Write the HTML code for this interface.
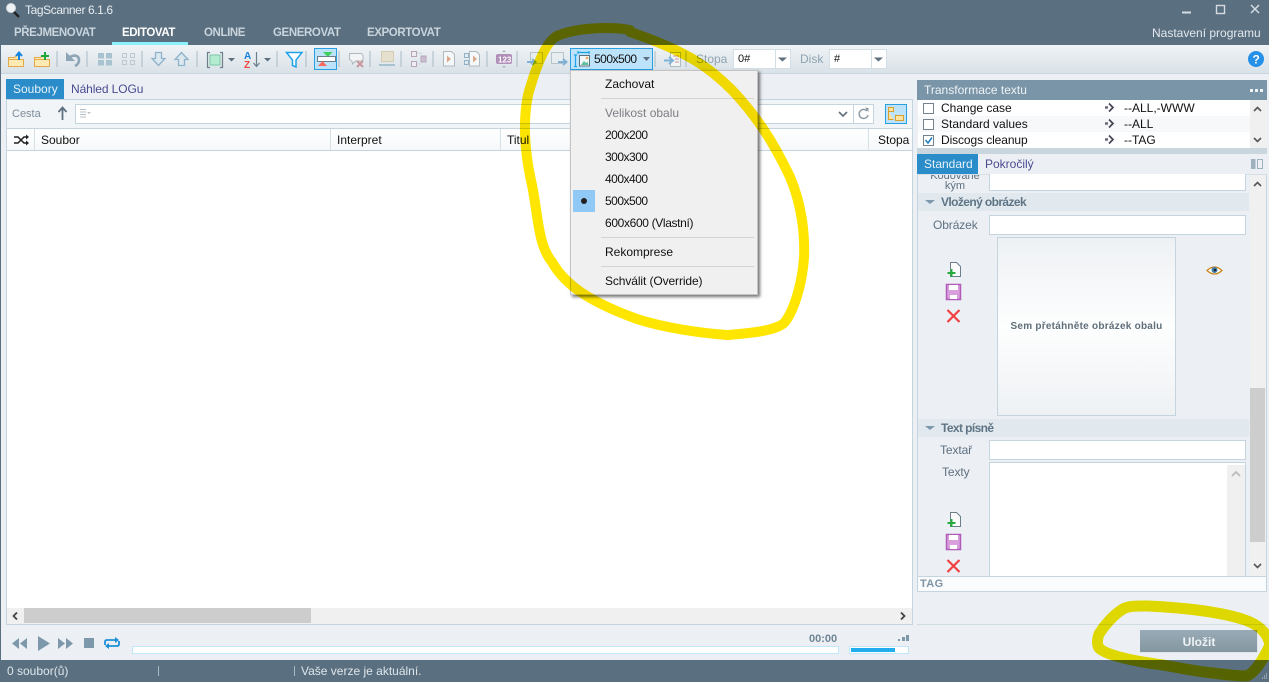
<!DOCTYPE html>
<html><head><meta charset="utf-8"><title>TagScanner</title>
<style>
html,body{margin:0;padding:0;background:#fff;width:1278px;height:684px;overflow:hidden}
#w{position:absolute;left:0;top:0;width:1269px;height:682px;overflow:hidden;background:#ecf0f5;font:12px "Liberation Sans",sans-serif;color:#111}
.b{position:absolute;box-sizing:border-box}
.t{position:absolute;white-space:nowrap;line-height:16px}
.n{letter-spacing:-.5px}
.m{color:#c9d4dc;font-weight:bold;top:25px;font-size:11.5px;letter-spacing:-.4px}
.l{color:#5f7080;letter-spacing:-.1px}
.h{color:#5f7585;font-weight:bold;letter-spacing:-.6px}
svg{position:absolute;left:0;top:0}
.i{background:#fff;border:1px solid #c5d5df}
</style></head><body><div id="w">

<div class="b" style="left:0;top:0;width:1269px;height:45px;background:#5a6f80"></div>
<div class="b" style="left:0;top:45px;width:1269px;height:29px;background:linear-gradient(#f0f3f6,#d9e2e8);border-bottom:1px solid #c9d6de"></div>
<div class="b" style="left:112px;top:42px;width:76px;height:3px;background:#8cf0fa"></div>
<div class="b" style="left:0;top:45px;width:1px;height:615px;background:#5a6f80"></div>

<div class="t" style="left:25px;top:2px;color:#e8edf0;letter-spacing:-.4px">TagScanner 6.1.6</div>
<div class="t m" style="left:14px">PŘEJMENOVAT</div>
<div class="t m" style="left:122px;color:#fff">EDITOVAT</div>
<div class="t m" style="left:204px">ONLINE</div>
<div class="t m" style="left:273px">GENEROVAT</div>
<div class="t m" style="left:367px">EXPORTOVAT</div>
<div class="t" style="left:1152px;top:25px;color:#e3e9ed">Nastavení programu</div>

<div class="b" style="left:314px;top:48px;width:23px;height:22px;background:#bde3fb;border:1px solid #2a9fe0"></div>
<div class="b" style="left:570px;top:48px;width:83px;height:22px;background:#bde3fb;border:1px solid #2a9fe0"></div>
<div class="t n" style="left:594px;top:51px">500x500</div>
<div class="t" style="left:696px;top:51px;color:#8fa3b1">Stopa</div>
<div class="t" style="left:800px;top:51px;color:#8fa3b1">Disk</div>
<div class="b i" style="left:733px;top:49px;width:58px;height:20px;border-color:#d4dee5"></div>
<div class="b" style="left:775px;top:50px;width:1px;height:18px;background:#d4dee5"></div>
<div class="b i" style="left:829px;top:49px;width:58px;height:20px;border-color:#d4dee5"></div>
<div class="b" style="left:871px;top:50px;width:1px;height:18px;background:#d4dee5"></div>
<div class="t" style="left:738px;top:51px;font-size:11px">0#</div>
<div class="t" style="left:834px;top:51px;font-size:11px">#</div>

<div class="b" style="left:6px;top:79px;width:58px;height:20px;background:#2a8cc8"></div>
<div class="t" style="left:13px;top:81px;color:#e8f3fa">Soubory</div>
<div class="t" style="left:71px;top:81px;color:#4a4a90;letter-spacing:-.1px">Náhled LOGu</div>
<div class="b" style="left:6px;top:99px;width:907px;height:526px;border:1px solid #c5d5df;background:#f2f5f8"></div>
<div class="t" style="left:12px;top:106px;color:#7d8c98;font-size:11px">Cesta</div>
<div class="b i" style="left:75px;top:104px;width:799px;height:20px"></div>
<div class="b" style="left:853px;top:105px;width:1px;height:18px;background:#c5d5df"></div>
<div class="b" style="left:885px;top:104px;width:22px;height:20px;background:#bde3fb;border:1px solid #2a9fe0"></div>
<div class="b" style="left:7px;top:128px;width:905px;height:23px;background:linear-gradient(#fff,#f6f8fa);border-top:1px solid #c5d5df;border-bottom:1px solid #c5d5df"></div>
<div class="b" style="left:34px;top:129px;width:1px;height:21px;background:#d5e0e7"></div>
<div class="b" style="left:330px;top:129px;width:1px;height:21px;background:#d5e0e7"></div>
<div class="b" style="left:500px;top:129px;width:1px;height:21px;background:#d5e0e7"></div>
<div class="b" style="left:868px;top:129px;width:1px;height:21px;background:#d5e0e7"></div>
<div class="t" style="left:41px;top:132px">Soubor</div>
<div class="t" style="left:337px;top:132px">Interpret</div>
<div class="t" style="left:507px;top:132px">Titul</div>
<div class="t" style="left:878px;top:132px">Stopa</div>
<div class="b" style="left:7px;top:151px;width:905px;height:457px;background:#fff"></div>
<div class="b" style="left:7px;top:608px;width:905px;height:16px;background:#f0f0f0"></div>
<div class="b" style="left:24px;top:608px;width:287px;height:15px;background:#cdcdcd"></div>

<div class="b" style="left:132px;top:646px;width:707px;height:8px;background:#fff;border:1px solid #bfe6fb"></div>
<div class="b" style="left:849px;top:646px;width:60px;height:8px;background:#fff;border:1px solid #bfe6fb"></div>
<div class="b" style="left:851px;top:648px;width:44px;height:4px;background:#22aeee"></div>
<div class="t" style="left:809px;top:631px;font-size:11px;font-weight:bold;color:#708494">00:00</div>

<div class="b" style="left:917px;top:80px;width:350px;height:20px;background:#7b95a8"></div>
<div class="t" style="left:924px;top:82px;color:#eef3f6">Transformace textu</div>
<div class="b" style="left:918px;top:100px;width:349px;height:48px;background:#fff"></div>
<div class="b" style="left:918px;top:116px;width:332px;height:16px;background:#f7f8fa"></div>
<div class="b" style="left:1250px;top:100px;width:17px;height:48px;background:#f0f0f0"></div>
<div class="b" style="left:917px;top:148px;width:350px;height:6px;background:#c9d6de"></div>
<div class="t" style="left:941px;top:100px">Change case</div>
<div class="t" style="left:941px;top:116px">Standard values</div>
<div class="t" style="left:941px;top:132px;letter-spacing:-.1px">Discogs cleanup</div>
<div class="t" style="left:1124px;top:100px">--ALL,-WWW</div>
<div class="t" style="left:1124px;top:116px">--ALL</div>
<div class="t" style="left:1124px;top:132px">--TAG</div>
<div class="b" style="left:923px;top:103px;width:11px;height:11px;background:#fff;border:1px solid #75828c"></div>
<div class="b" style="left:923px;top:119px;width:11px;height:11px;background:#fff;border:1px solid #75828c"></div>
<div class="b" style="left:923px;top:135px;width:11px;height:11px;background:#fff;border:1px solid #75828c"></div>

<div class="b" style="left:917px;top:154px;width:61px;height:20px;background:#2a8cc8"></div>
<div class="t" style="left:924px;top:156px;color:#e8f3fa">Standard</div>
<div class="t" style="left:985px;top:156px;color:#4a4a90">Pokročilý</div>
<div class="b" style="left:917px;top:174px;width:350px;height:403px;border:1px solid #c5d5df;border-top:1px solid #d5e0e7;background:#ecf0f5"></div>
<div class="b" style="left:1250px;top:175px;width:16px;height:401px;background:#f0f0f0"></div>
<div class="b" style="left:1250px;top:388px;width:15px;height:154px;background:#cdcdcd"></div>
<div class="b" style="left:925px;top:175px;width:60px;height:17px;overflow:hidden;text-align:center;color:#5f7080;font-size:11px;line-height:10px"><div style="margin-top:-4px">Kódované<br>kým</div></div>
<div class="b i" style="left:989px;top:174px;width:257px;height:17px;border-top:0"></div>
<div class="b" style="left:918px;top:193px;width:331px;height:18px;background:#e1e8ee"></div>
<div class="t h" style="left:941px;top:194px">Vložený obrázek</div>
<div class="t l" style="left:933px;top:217px">Obrázek</div>
<div class="b i" style="left:989px;top:215px;width:257px;height:20px"></div>
<div class="b" style="left:997px;top:237px;width:179px;height:179px;border:1px solid #c5d5df;background:linear-gradient(#eef1f4,#fdfefe 50%,#eef1f4)"></div>
<div class="t" style="left:997px;top:319px;width:179px;text-align:center;font-size:10px;font-weight:bold;color:#5f6e7a;letter-spacing:.25px">Sem přetáhněte obrázek obalu</div>
<div class="b" style="left:918px;top:419px;width:331px;height:18px;background:#e1e8ee"></div>
<div class="t h" style="left:941px;top:420px">Text písně</div>
<div class="t l" style="left:940px;top:442px">Textař</div>
<div class="b i" style="left:989px;top:440px;width:257px;height:20px"></div>
<div class="t l" style="left:942px;top:464px">Texty</div>
<div class="b i" style="left:989px;top:462px;width:257px;height:115px"></div>
<div class="b" style="left:1227px;top:465px;width:18px;height:111px;background:#f0f0f0"></div>
<div class="b" style="left:917px;top:576px;width:350px;height:16px;border:1px solid #c5d5df;background:#fafbfd"></div>
<div class="t" style="left:920px;top:576px;font-size:11px;font-weight:bold;color:#7e94a5;letter-spacing:.4px">TAG</div>
<div class="b" style="left:917px;top:624px;width:350px;height:1px;background:#d0dde3"></div>
<div class="b" style="left:1140px;top:630px;width:118px;height:23px;background:linear-gradient(#99abb7,#84969f);border-right:1px solid #dfe6ea;border-bottom:1px solid #dfe6ea"></div>
<div class="t" style="left:1140px;top:634px;width:118px;text-align:center;font-weight:bold;color:#eef2f4">Uložit</div>

<div class="b" style="left:0;top:660px;width:1269px;height:22px;background:#5a6f80"></div>
<div class="t" style="left:7px;top:663px;color:#dfe6ea">0 soubor(ů)</div>
<div class="t" style="left:301px;top:663px;color:#dfe6ea">Vaše verze je aktuální.</div>
<div class="b" style="left:158px;top:666px;width:1px;height:10px;background:#aab8c2"></div>
<div class="b" style="left:294px;top:666px;width:1px;height:10px;background:#aab8c2"></div>

<svg width="1269" height="682" viewBox="0 0 1269 682" fill="none">
<!-- magnifier -->
<circle cx="11" cy="8" r="4.5" fill="#eef2f4" stroke="#cfd8de"/><path d="M14 12l5 5" stroke="#222" stroke-width="2.4"/>
<!-- window buttons -->
<path d="M1182 12.500h9" stroke="#d5dde2" stroke-width="2"/><rect x="1216.500" y="5.500" width="8" height="8" stroke="#d5dde2" stroke-width="1.400"/><path d="M1251 5l8 8M1259 5l-8 8" stroke="#d5dde2" stroke-width="1.500"/>
<!-- separators -->
<path d="M57 51v16M87 51v16M142 51v16M197 51v16M277 51v16M306 51v16M339 51v16M370 51v16M401 51v16M433 51v16M487 51v16M517 51v16M655 51v16M686 51v16" stroke="#a9bac6"/>
<!-- folders -->
<g stroke="#e3a94a" fill="#fde9b4"><path d="M8.500 57.500h6l2-2h3v11h-11z"/><path d="M8.500 59.500h15v7h-15z"/><path d="M34.500 57.500h6l2-2h3v11h-11z"/><path d="M34.500 59.500h15v7h-15z"/></g>
<path d="M19 60v-7M16 56l3-3.500 3 3.500" stroke="#1683dc" stroke-width="2"/><path d="M45 52v8M41 56h8" stroke="#22a83a" stroke-width="2"/>
<!-- undo -->
<path d="M66 52v9h9z" fill="#8ea5b5"/><path d="M70 57c5-3 9-1 9 3 0 3-2 5-4 6" stroke="#8ea5b5" stroke-width="2.600"/>
<!-- grids -->
<g fill="#a9c2cf"><rect x="98" y="53" width="6" height="5.500"/><rect x="106" y="53" width="6" height="5.500"/><rect x="98" y="60" width="6" height="5.500"/><rect x="106" y="60" width="6" height="5.500"/></g>
<g stroke="#bcc7ce"><rect x="122.500" y="53.500" width="4" height="4"/><rect x="130.500" y="53.500" width="4" height="4"/><rect x="122.500" y="60.500" width="4" height="4"/><rect x="130.500" y="60.500" width="4" height="4"/></g>
<!-- down up -->
<path d="M155.500 52.500h6v6h3.500l-6.500 7-6.500-7h3.500z" stroke="#8fb3cb" stroke-width="1.300" fill="#dce8ef"/><path d="M178.500 65.500h6v-6h3.500l-6.500-7-6.500 7h3.500z" stroke="#8fb3cb" stroke-width="1.300" fill="#dce8ef"/>
<!-- frame -->
<rect x="210" y="55" width="10" height="10" fill="#b3ecd0" stroke="#7ec8a8"/><path d="M210 52.500h-2.500v15h2.500M220 52.500h2.500v15h-2.500" stroke="#6c7f8c" stroke-width="1.200"/>
<path d="M228 58h7l-3.500 3.500zM264 58h7l-3.500 3.500zM643 57h7l-3.500 4zM778 57.500h9l-4.500 4zM874 57.500h9l-4.500 4z" fill="#5d6f7d"/>
<!-- AZ -->
<text x="244" y="59" font-family="Liberation Sans" font-size="10" font-weight="bold" fill="#1683dc">A</text><text x="244" y="68" font-family="Liberation Sans" font-size="10" font-weight="bold" fill="#f0483e">Z</text>
<path d="M256.500 52v14M253.500 63l3 3.500 3-3.500" stroke="#6c7f8c" stroke-width="1.200"/>
<!-- funnel -->
<path d="M286.500 52.500h15.500l-6 7.500v7l-3.500-1.500v-5.500z" stroke="#1fa3e8" stroke-width="1.500" fill="#fff"/>
<!-- toggled -->
<path d="M323 52h9.500l-4.750 5z" fill="#3ed05a"/><rect x="317.500" y="56.500" width="18" height="5" fill="#fff" stroke="#6c7f8c"/><path d="M318 66l4.500-5 4.500 5z" fill="#f86a5e"/>
<!-- comment-x -->
<path d="M349.500 53.500h12l1.500 2v4l-1.500 1.500h-6l-3 3-0.500-3-2.500-1.500z" stroke="#aeb9c0" fill="#f2f4f6"/><path d="M357 61l6 6M363 61l-6 6" stroke="#c8979b" stroke-width="2"/>
<!-- gray folder -->
<path d="M381.500 51.500h12v10h-12z" stroke="#d3cbb4" fill="#e6e1cf"/><path d="M379 65h16" stroke="#a9c2cf" stroke-width="2"/>
<!-- squares -->
<g stroke="#b6a6bc" fill="#f0edf2"><rect x="411.500" y="51.500" width="5" height="5"/><rect x="411.500" y="61.500" width="5" height="5"/></g><rect x="421" y="56" width="5" height="6" fill="#cdbdd2" stroke="#b6a6bc"/><path d="M417 53h4M417 64h4M421 53v2M421 62v2" stroke="#bcc7ce" stroke-dasharray="1 1"/>
<!-- page play -->
<path d="M443.500 51.500h8l3 3v11.500h-11z" stroke="#aeb9c0" fill="#f6f7f8"/><path d="M447 55.500l4 3.500-4 3.500z" fill="#d9a98b"/>
<path d="M469.500 51.500h7l3 3v11.500h-10z" stroke="#aeb9c0" fill="#f6f7f8"/><path d="M473 55.500l4 3.500-4 3.500z" fill="#d9a98b"/><rect x="464.500" y="53.500" width="4" height="4" fill="none" stroke="#8fb3cb"/><rect x="464.500" y="60.500" width="4" height="4" fill="none" stroke="#8fb3cb"/>
<!-- 123 -->
<rect x="496" y="54" width="16" height="10" rx="2" fill="#b08fb8"/><text x="498" y="62.500" font-family="Liberation Sans" font-size="8" font-weight="bold" fill="#fff">123</text><path d="M502 52l2-2 2 2M502 66l2 2 2-2" fill="#a8b6c0"/>
<!-- image arrows -->
<rect x="530.500" y="52.500" width="12" height="11" stroke="#b8c4cc" fill="#e8edf0"/><path d="M527 62h8M532 59l3.500 3-3.500 3" stroke="#7fb2d6" stroke-width="2"/>
<rect x="551.500" y="52.500" width="12" height="11" stroke="#b8c4cc" fill="#e8edf0"/><path d="M558 62h8M563 59l3.500 3-3.500 3" stroke="#7fb2d6" stroke-width="2"/>
<!-- size icon -->
<path d="M578 52.500h11M578 51v3M589 51v3M575.500 55v11M574 55h3M574 66.500h3" stroke="#1fa3e8" stroke-width="1.200"/><rect x="579.500" y="55.500" width="10" height="10.500" fill="#f4f7f8" stroke="#5d6f7d"/><path d="M581 65l3-4 2 2 1.500-1.500 1 3.500z" fill="#5cc0a0"/><circle cx="587" cy="58" r="1.300" fill="#e8a860"/>
<!-- list -->
<rect x="670.500" y="52.500" width="10" height="14" stroke="#aeb9c0" fill="#f2f4f6"/><path d="M673 56h6M675 59h4M675 62h4" stroke="#c8979b"/><path d="M664 60.500h9M669 57l4 3.500-4 3.500" stroke="#7fb2d6" stroke-width="2"/>
<!-- help -->
<circle cx="1256" cy="59" r="8" fill="#2590e8"/><text x="1252.500" y="63.500" font-family="Liberation Sans" font-size="12" font-weight="bold" fill="#fff">?</text>
<!-- path row -->
<path d="M62.500 120v-12M58.500 112l4-4.500 4 4.500" stroke="#5f7080" stroke-width="1.800"/>
<path d="M80 109.500h6M80 112h6M80 114.500h6M80 117h6" stroke="#b4bfc7"/><path d="M87 112h4l-2 2z" fill="#b4bfc7"/>
<path d="M839 112l4 4 4-4" stroke="#5f7080" stroke-width="1.600"/>
<path d="M867 111a4.500 4.500 0 1 0 1 4" stroke="#8a98a2" stroke-width="1.400"/><path d="M865 107.500l3.500 .5v4z" fill="#8a98a2"/>
<path d="M888.500 107.500h5v4h-5zM888.500 111.500v8h5M895.500 115.500h8v5h-8z" stroke="#d99e2e" fill="#fde3a0"/>
<path d="M14 137h4l6 6h4M14 143h4l6-6h4" stroke="#222" stroke-width="1.500"/><path d="M26 134.500l3 2.500-3 2.500zM26 140.500l3 2.500-3 2.500z" fill="#222"/>
<!-- hscroll arrows -->
<path d="M17 612.500l-3.500 3.500 3.500 3.500M901 612.500l3.500 3.500-3.500 3.500" stroke="#444" stroke-width="1.800"/>
<!-- player -->
<g fill="#7d98ab"><path d="M19 638v11l-7-5.500zM27 638v11l-7-5.500zM38 636v15l12-7.500zM58 638v11l7-5.500zM66 638v11l7-5.500z"/><rect x="84" y="638" width="10" height="10"/><rect x="898" y="639" width="2" height="2"/><rect x="902" y="637" width="3" height="4"/><rect x="906" y="635" width="3" height="6"/></g>
<path d="M105 645v-3q0-2 2-2h11M119 641v3q0 2-2 2h-11" stroke="#1d8fd6" stroke-width="1.800"/><path d="M115 637l4 3-4 3zM109 643l-4 3 4 3z" fill="#1d8fd6"/>
<!-- transform -->
<path d="M1250 90h3v3h-3zM1255 90h3v3h-3zM1260 90h3v3h-3z" fill="#eef3f6" transform="translate(0 -1)"/>
<path d="M1105 107.500h3M1105 123.500h3M1105 139.500h3" stroke="#667" stroke-width="2.400"/><path d="M1109 103.500l4 4-4 4M1109 119.500l4 4-4 4M1109 135.500l4 4-4 4" stroke="#445" stroke-width="1.700"/>
<path d="M925.500 140l2.500 3 4-5.500" stroke="#1d7fc0" stroke-width="1.500"/>
<path d="M1254 111l3.500-3.500 3.500 3.500M1254 138l3.500 3.500 3.500-3.500M1254 186l3.500-3.500 3.500 3.500M1254 564l3.500 3.500 3.500-3.500" stroke="#555" stroke-width="1.600"/>
<path d="M1232 476l4-4 4 4" stroke="#bbb" stroke-width="1.800"/>
<rect x="1251" y="159" width="4.500" height="10" fill="#9eb1be"/><rect x="1257.500" y="159.500" width="5" height="9" stroke="#9eb1be"/>
<!-- section arrows -->
<path d="M925 200h10l-5 4zM925 426h10l-5 4z" fill="#7d98ab"/>
<!-- left icons in form -->
<g><path d="M950.500 262.500h6l4 4v10h-10z" stroke="#6c7f8c" fill="#fdfdfd"/><path d="M951.500 269v8M947.500 273h8" stroke="#25ad3e" stroke-width="2"/>
<path d="M946.500 284.500h14v15h-14z" fill="#d89fdc" stroke="#b05cb8" stroke-width="1.500"/><rect x="949" y="285" width="9" height="5" fill="#fff"/><rect x="950" y="295" width="7" height="4" fill="#fff"/>
<path d="M947.500 310l12 12M959.500 310l-12 12" stroke="#f04040" stroke-width="2.200"/></g>
<g transform="translate(0 250)"><path d="M950.500 262.500h6l4 4v10h-10z" stroke="#6c7f8c" fill="#fdfdfd"/><path d="M951.500 269v8M947.500 273h8" stroke="#25ad3e" stroke-width="2"/>
<path d="M946.500 284.500h14v15h-14z" fill="#d89fdc" stroke="#b05cb8" stroke-width="1.500"/><rect x="949" y="285" width="9" height="5" fill="#fff"/><rect x="950" y="295" width="7" height="4" fill="#fff"/>
<path d="M947.500 310l12 12M959.500 310l-12 12" stroke="#f04040" stroke-width="2.200"/></g>
<!-- eye -->
<path d="M1207 270.500q7.500-7 15 0q-7.500 7-15 0z" fill="#fff" stroke="#c9861c" stroke-width="1.300"/><circle cx="1214.500" cy="270" r="3" fill="#3f7fae"/><circle cx="1215" cy="270" r="1.300" fill="#223"/>
<!-- grip -->
<path d="M1266 674h1M1264 676h1M1266 676h1M1262 678h1M1264 678h1M1266 678h1" stroke="#cfd8de"/>
</svg>

<!-- menu -->
<div class="b" style="left:570px;top:70px;width:188px;height:225px;background:#f0f0f0;border:1px solid #c4c4c4;box-shadow:2px 2px 3px rgba(0,0,0,.55)"></div>
<div class="b" style="left:573px;top:190px;width:22px;height:22px;background:#90c8f6"></div>
<div class="b" style="left:581px;top:198px;width:6px;height:6px;border-radius:50%;background:#222"></div>
<div class="b" style="left:601px;top:98px;width:153px;height:1px;background:#d4d4d4"></div>
<div class="b" style="left:601px;top:237px;width:153px;height:1px;background:#d4d4d4"></div>
<div class="b" style="left:601px;top:266px;width:153px;height:1px;background:#d4d4d4"></div>
<div class="t" style="left:605px;top:76px">Zachovat</div>
<div class="t" style="left:605px;top:105px;color:#7d7d85">Velikost obalu</div>
<div class="t n" style="left:605px;top:127px">200x200</div>
<div class="t n" style="left:605px;top:149px">300x300</div>
<div class="t n" style="left:605px;top:171px">400x400</div>
<div class="t n" style="left:605px;top:193px">500x500</div>
<div class="t" style="left:605px;top:215px;letter-spacing:-.35px">600x600 (Vlastní)</div>
<div class="t" style="left:605px;top:244px">Rekomprese</div>
<div class="t" style="left:605px;top:273px;letter-spacing:-.1px">Schválit (Override)</div>

<!-- marker -->
<svg width="1269" height="682" viewBox="0 0 1269 682" fill="none" style="mix-blend-mode:multiply">
<path d="M630 30C610 26 575 28 557 36C545 42 535 70 528 95C523 120 524 150 532 185C538 215 538 245 552 262C565 285 590 302 637 319C665 328 700 333 727 335C755 333 778 330 785 322C794 310 802 285 804 258C805 235 802 205 790 177C777 150 762 122 732 90C712 70 690 52 630 32" stroke="#ffe600" stroke-width="10" stroke-linecap="round"/>
<path d="M1148 606C1135 606 1128 606 1123 609C1113 615 1104 626 1099 634C1097 640 1097 645 1099 648C1105 654 1125 660 1163 665C1185 669 1200 672 1213 673C1228 675 1240 676 1247 676C1255 672 1262 662 1270 645C1268 635 1262 626 1245 620C1225 613 1190 608 1148 606" stroke="#f0e600" stroke-width="11" stroke-linecap="round"/>
</svg>
</div></body></html>
